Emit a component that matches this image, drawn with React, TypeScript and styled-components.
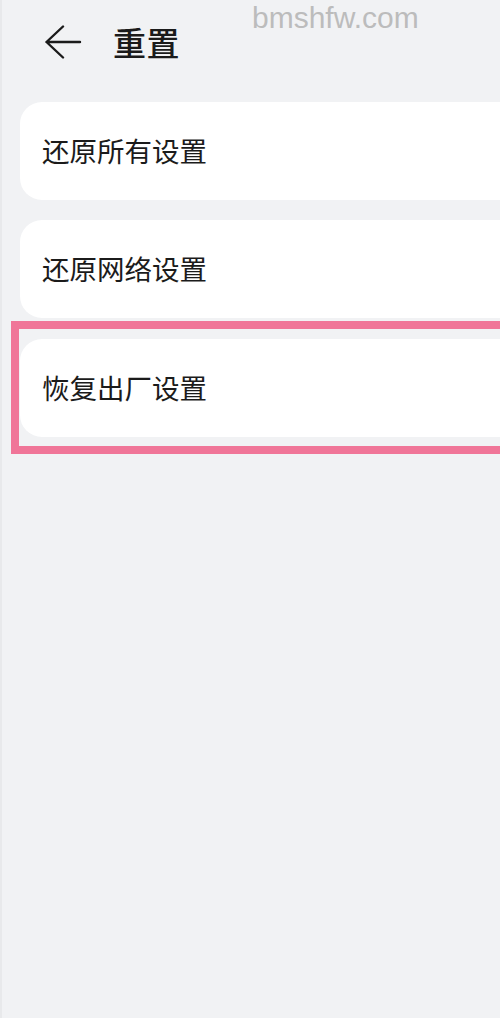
import { FC } from 'react';
import styled, { createGlobalStyle } from 'styled-components';

const GlobalStyle = createGlobalStyle`
  html, body {
    margin: 0;
    padding: 0;
    background-color: #f1f2f4;
  }

  body {
    font-family: 'Noto Sans CJK SC', 'Noto Sans', sans-serif;
    color: #1b1b1b;
    overflow: hidden;
  }
`;

const Screen = styled.div`
  position: relative;
  width: 500px;
  height: 1018px;
  overflow: hidden;
  background-color: #f1f2f4;
  box-shadow: inset 5px 0 0 -3px #e8e9eb;
`;

const Watermark = styled.span`
  position: absolute;
  top: 0;
  left: 252px;
  font-family: 'Liberation Sans', Arial, sans-serif;
  font-size: 30px;
  line-height: 36px;
  color: #bcbcbc;
  pointer-events: none;
`;

const Header = styled.header`
  display: flex;
  align-items: center;
  height: 84px;
  padding-left: 44px;
`;

const BackButton = styled.button`
  display: flex;
  align-items: center;
  justify-content: center;
  width: 38px;
  height: 38px;
  padding: 0;
  border: none;
  background: none;
  cursor: pointer;
`;

const Title = styled.h1`
  margin: 0 0 0 31px;
  font-size: 33px;
  font-weight: 500;
  line-height: 1;
  letter-spacing: 0.5px;
`;

const List = styled.div`
  display: flex;
  flex-direction: column;
  gap: 20px;
  width: 540px;
  padding: 18px 0 0 20px;
`;

const Card = styled.div`
  display: flex;
  align-items: center;
  height: 98px;
  padding-left: 22px;
  border-radius: 22px;
  background-color: #ffffff;
  font-size: 27.5px;
  font-weight: 400;
  line-height: 1;
  cursor: pointer;
`;

const Highlight = styled.div`
  margin: -17px 0 0 -9px;
  padding: 10px 0 9px 1px;
  border: 8px solid #f07598;
  border-right: none;
`;

const items = ['还原所有设置', '还原网络设置'];

const App: FC = () => {
  return (
    <>
      <GlobalStyle />
      <Screen>
        <Watermark>bmshfw.com</Watermark>
        <Header>
          <BackButton aria-label="返回">
            <svg width="38" height="34" viewBox="0 0 38 34" fill="none">
              <path
                d="M19 1.5 L2.5 17 L19 32.5 M2.5 17 H36"
                stroke="#1b1b1b"
                strokeWidth="2.4"
                strokeLinecap="round"
                strokeLinejoin="round"
              />
            </svg>
          </BackButton>
          <Title>重置</Title>
        </Header>
        <List>
          {items.map((label) => (
            <Card key={label}>{label}</Card>
          ))}
          <Highlight>
            <Card>恢复出厂设置</Card>
          </Highlight>
        </List>
      </Screen>
    </>
  );
};

export default App;
